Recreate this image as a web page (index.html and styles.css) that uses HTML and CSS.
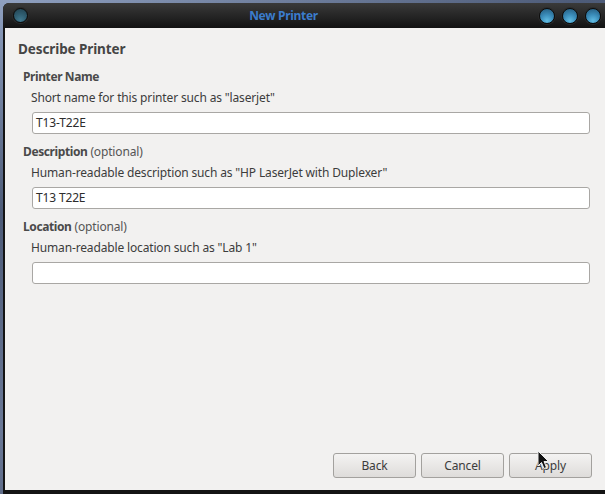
FILE: index.html
```html
<!DOCTYPE html>
<html>
<head>
<meta charset="utf-8">
<link rel="stylesheet" href="styles.css">
</head>
<body>
<div class="window">
  <div class="titlebar">
    <span class="orb orb-dim"></span>
    <span class="title">New Printer</span>
    <span class="orbs"><span class="orb"></span><span class="orb"></span><span class="orb"></span></span>
  </div>
  <div class="content">
    <h1 class="heading">Describe Printer</h1>
    <div class="field">
      <div class="label"><b>Printer Name</b></div>
      <div class="hint">Short name for this printer such as "laserjet"</div>
      <div class="entry">T13-T22E</div>
    </div>
    <div class="field">
      <div class="label"><b>Description</b> (optional)</div>
      <div class="hint">Human-readable description such as "HP LaserJet with Duplexer"</div>
      <div class="entry">T13 T22E</div>
    </div>
    <div class="field">
      <div class="label"><b>Location</b> (optional)</div>
      <div class="hint">Human-readable location such as "Lab 1"</div>
      <div class="entry"></div>
    </div>
    <div class="buttons">
      <button class="btn">Back</button>
      <button class="btn">Cancel</button>
      <button class="btn">Apply</button>
    </div>
  </div>
</div>
<svg class="cursor" width="13" height="21" viewBox="0 0 13 21"><path d="M1 1 L1 16 L4.5 12.5 L7 18.5 L9.5 17.5 L7 11.5 L11.5 11.5 Z" fill="#111" stroke="#eee" stroke-width="1"/></svg>
</body>
</html>
```
FILE: styles.css
```css
html, body { margin: 0; padding: 0; }
body {
  width: 605px; height: 494px; overflow: hidden; position: relative;
  background: linear-gradient(160deg, #8fa0c0 0%, #4d5b78 30%, #6a7896 60%, #3f4a64 100%);
  font-family: "Noto Sans", "DejaVu Sans", sans-serif;
  color: #3c3c3c;
}
.window {
  margin: 3px 0 0 3px;
  width: 602px; height: 491px;
  display: flex; flex-direction: column;
  background: #141414;
  border-radius: 6px 0 0 0;
  overflow: hidden;
}
.titlebar {
  height: 25px; flex: none;
  display: flex; align-items: center;
  background: linear-gradient(#3a3a3a, #2a2a2a 40%, #121212);
  padding: 0 0 0 10px;
}
.title {
  flex: 1; text-align: center;
  color: #3b7ccc; font-weight: bold; font-size: 12px;
  letter-spacing: -0.3px;
}
.orbs { display: flex; gap: 7px; margin-right: 4px; }
.orb {
  width: 16px; height: 16px; border-radius: 50%;
  box-sizing: border-box;
  border: 1px solid #0c0c0c;
  background: radial-gradient(circle at 50% 85%, #62bde3 0%, #3b8dba 45%, #225678 100%);
  box-shadow: 0 0 0 1px #2b2b2b;
}
.orb-dim {
  width: 15px; height: 15px;
  background: radial-gradient(circle at 50% 85%, #41798f 0%, #2e5b6e 50%, #21404d 100%);
}
.content {
  flex: 1;
  margin-left: 2px; margin-bottom: 4px;
  background: #f2f1f0;
  display: flex; flex-direction: column;
  padding: 13px 15px 12px 13px;
  font-size: 12px;
  letter-spacing: -0.15px;
}
.heading {
  margin: 0; font-size: 13.5px; font-weight: bold; line-height: 16px;
  color: #454545; letter-spacing: -0.1px;
}
.field { padding-left: 5px; }
.label { line-height: 16px; margin-top: 10px; color: #555; }
.label b { color: #4a4a4a; letter-spacing: -0.4px; }
.field:first-of-type .label { margin-top: 12px; }
.hint { line-height: 16px; margin-top: 5px; padding-left: 8px; color: #3c3c3c; }
.entry {
  margin: 6px 0 0 9px; height: 22px; box-sizing: border-box;
  border: 1px solid #a9a7a4; border-radius: 3px; background: #fff;
  padding: 0 3px; line-height: 20px; font-size: 12px; color: #2c2c2c;
}
.buttons {
  margin-top: auto; margin-right: -2px;
  display: flex; justify-content: flex-end; gap: 5px;
}
.btn {
  width: 83px; height: 25px; box-sizing: border-box;
  border: 1px solid #a3a19e; border-radius: 3px;
  background: linear-gradient(#f4f3f2, #dedcda);
  font-family: inherit; font-size: 12px; color: #3c3c3c;
  letter-spacing: -0.15px;
  padding: 0;
}
.cursor { position: absolute; left: 537px; top: 450px; }
```
